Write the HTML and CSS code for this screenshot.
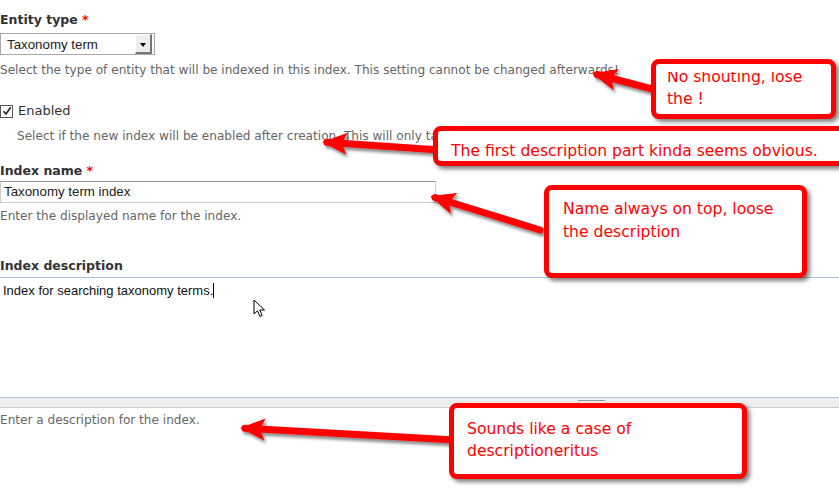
FILE: index.html
```html
<!DOCTYPE html>
<html lang="en">

<head>
    <meta charset="UTF-8">
    <title>Add index</title>
    <link rel="stylesheet" href="styles.css">
</head>

<body>

    <div class="form">
        <div class="form-item entity-type">
            <label>Entity type <span class="req">*</span></label>
            <div class="select">
                <span>Taxonomy term</span>
                <span class="select-btn"><span class="tri"></span></span>
            </div>
            <div class="description">Select the type of entity that will be indexed in this index. This setting cannot be changed afterwards!</div>
        </div>

        <div class="form-item enabled">
            <div class="checkbox-row">
                <span class="checkbox">
                    <svg width="10" height="10" viewBox="0 0 10 10"><path d="M1.5 5.2 L4 8 L8.7 1.2" fill="none" stroke="#222" stroke-width="1.6"/></svg>
                </span>
                <span>Enabled</span>
            </div>
            <div class="description indent">Select if the new index will be enabled after creation. This will only take effect if the selected server is also enabled.</div>
        </div>

        <div class="form-item index-name">
            <label>Index name <span class="req">*</span></label>
            <div class="text-input">Taxonomy term index</div>
            <div class="description">Enter the displayed name for the index.</div>
        </div>

        <div class="form-item index-desc">
            <label>Index description</label>
            <div class="textarea">
                <span>Index for searching taxonomy terms.</span><span class="caret"></span>
            </div>
            <div class="grippie"><span></span></div>
            <div class="description">Enter a description for the index.</div>
        </div>
    </div>

    <!-- review notes drawn on top of the form -->
    <svg class="arrows" width="839" height="496">
        <defs>
            <marker id="head" markerUnits="userSpaceOnUse" markerWidth="26" markerHeight="24" refX="20" refY="12" orient="auto">
                <path d="M25 12 L0 1 L5 12 L0 23 Z" fill="#f00"/>
            </marker>
            <filter id="shadow" x="-10%" y="-30%" width="130%" height="180%">
                <feDropShadow dx="2" dy="3" stdDeviation="1.5" flood-opacity="0.45"/>
            </filter>
        </defs>
        <g stroke="#f00" stroke-width="7" stroke-linecap="round" filter="url(#shadow)">
            <line x1="656" y1="90" x2="597" y2="74.5" marker-end="url(#head)"/>
            <line x1="440" y1="150" x2="327" y2="142.3" marker-end="url(#head)"/>
            <line x1="540" y1="230" x2="435" y2="197.5" marker-end="url(#head)"/>
            <line x1="455" y1="440" x2="245" y2="428.3" marker-end="url(#head)"/>
        </g>
    </svg>

    <div class="note note-1"><div class="note-text">No shouting, lose the !</div></div>
    <div class="note note-2"><div class="note-text">The first description part kinda seems obvious.</div></div>
    <div class="note note-3"><div class="note-text">Name always on top, loose the description</div></div>
    <div class="note note-4"><div class="note-text">Sounds like a case of descriptioneritus</div></div>

    <svg class="pointer" width="14" height="20" viewBox="0 0 14 20">
        <path d="M1 1 L1 15 L4.5 11.8 L7 17.5 L9.2 16.5 L6.8 11 L11.5 11 Z" fill="#fff" stroke="#000" stroke-width="1"/>
    </svg>

</body>

</html>
```

FILE: styles.css
```css
html, body {
    margin: 0;
    padding: 0;
    overflow: hidden;
}

body {
    background-color: #fff;
    font-family: "DejaVu Sans", Verdana, sans-serif;
    font-size: 13px;
    color: #333;
    width: 839px;
    height: 496px;
    position: relative;
}

.form {
    padding-top: 12px;
}

.form-item label {
    display: block;
    font-weight: bold;
    font-size: 12.5px;
    line-height: 16px;
    color: #333;
}

.req {
    color: #f00;
}

.description {
    font-size: 12.1px;
    line-height: 16px;
    color: #666;
    white-space: nowrap;
}

.description.indent {
    padding-left: 17px;
}

/* select box */
.select {
    margin-top: 5px;
    height: 20px;
    border: 1px solid #aaa;
    display: flex;
    align-items: center;
    justify-content: space-between;
    font-family: "Liberation Sans", Arial, sans-serif;
    font-size: 13.3px;
    color: #222;
    padding-left: 6px;
    width: 147px;
}

.select-btn {
    width: 14px;
    height: 17px;
    margin-right: 2px;
    background-color: #eee;
    border-right: 2px solid #777;
    border-bottom: 2px solid #777;
    border-top: 1px solid #fff;
    border-left: 1px solid #fff;
    display: flex;
    align-items: center;
    justify-content: center;
}

.tri {
    width: 0;
    height: 0;
    border-left: 3px solid transparent;
    border-right: 3px solid transparent;
    border-top: 4px solid #000;
    position: relative;
    top: 1px;
}

.entity-type .description {
    margin-top: 7px;
}

/* checkbox */
.enabled {
    margin-top: 25px;
}

.checkbox-row {
    display: flex;
    align-items: center;
    gap: 5px;
    line-height: 16px;
    color: #333;
}

.checkbox {
    width: 11px;
    height: 11px;
    border: 1px solid #555;
    display: flex;
    align-items: center;
    justify-content: center;
    background: #fff;
}

.enabled .description {
    margin-top: 9px;
}

/* text field */
.index-name {
    margin-top: 19px;
}

.text-input {
    margin-top: 2px;
    width: 431px;
    height: 20px;
    border: 1px solid #ccc;
    border-top-color: #999;
    padding-left: 3px;
    font-family: "Liberation Sans", Arial, sans-serif;
    font-size: 13.3px;
    line-height: 20px;
    color: #222;
}

.index-name .description {
    margin-top: 5px;
}

/* textarea */
.index-desc {
    margin-top: 34px;
}

.textarea {
    margin-top: 3px;
    border-top: 1px solid #a9c0dc;
    border-bottom: 1px solid #a9c0dc;
    padding: 4px 3px;
    box-sizing: border-box;
    height: 121px;
    font-family: "Liberation Sans", Arial, sans-serif;
    font-size: 13px;
    line-height: 17px;
    color: #111;
}

.caret {
    display: inline-block;
    width: 1px;
    height: 15px;
    background: #000;
    vertical-align: -3px;
}

.grippie {
    height: 9px;
    background-color: #eee;
    border-bottom: 1px solid #ccc;
}

.grippie span {
    display: block;
    margin-left: 578px;
    width: 27px;
    height: 3px;
    border-top: 1px solid #999;
    border-bottom: 1px solid #999;
    position: relative;
    top: 2px;
}

.index-desc .description {
    margin-top: 4px;
}

/* annotation overlay */
.arrows {
    position: absolute;
    left: 0;
    top: 0;
}

.note {
    position: absolute;
    background: #fff;
    border: 5px solid #f00;
    border-radius: 8px;
    box-shadow: 3px 3px 4px rgba(0, 0, 0, 0.5);
    color: #f00;
    font-family: "DejaVu Sans", Verdana, sans-serif;
    font-size: 15.6px;
    line-height: 22px;
    overflow: hidden;
    box-sizing: border-box;
}

.note-1 {
    left: 651px;
    top: 59px;
    width: 185px;
    height: 60px;
    padding: 2px 6px 0 11px;
}

.note-1 .note-text {
    clip-path: inset(6px 0 0 0);
}

.note-2 {
    left: 433px;
    top: 126px;
    width: 420px;
    height: 40px;
    padding: 9px 0 0 13px;
    white-space: nowrap;
}

.note-3 {
    left: 544px;
    top: 185px;
    width: 263px;
    height: 93px;
    padding: 8px 8px 0 14px;
    line-height: 23px;
}

.note-4 {
    left: 449px;
    top: 403px;
    width: 298px;
    height: 76px;
    padding: 10px 8px 0 13px;
}

.pointer {
    position: absolute;
    left: 253px;
    top: 299px;
}
```
